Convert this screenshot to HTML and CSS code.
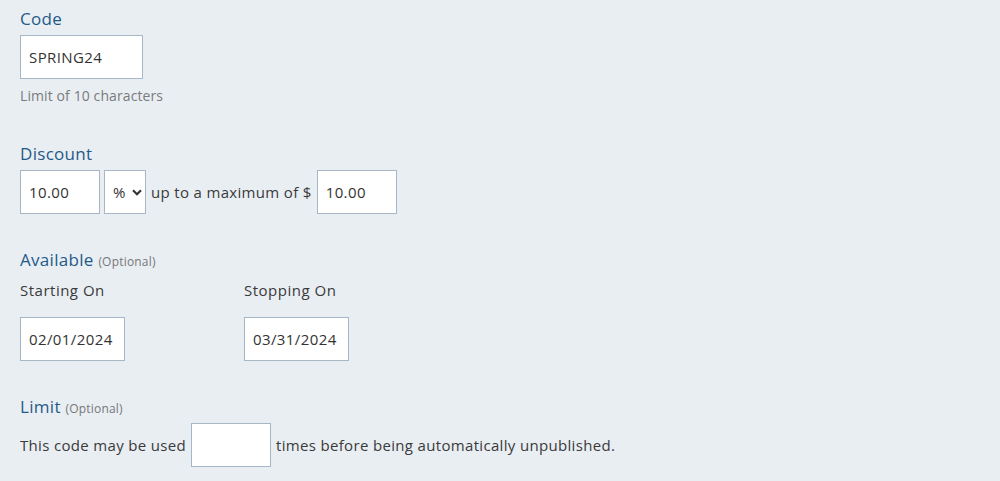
FILE: index.html
```html
<!DOCTYPE html>
<html>
	<head>
		<meta charset="utf-8">
		<title>Coupon</title>
		<link rel="stylesheet" href="styles.css">
	</head>
	<body>
		<form class="coupon-form">
			<div class="field field-code">
				<label class="field-label" for="code">Code</label>
				<input type="text" id="code" class="text-input code-input" value="SPRING24">
				<div class="help-text">Limit of 10 characters</div>
			</div>
			<div class="field">
				<label class="field-label" for="amount">Discount</label>
				<div class="inline-row">
					<input type="text" id="amount" class="text-input amount-input" value="10.00">
					<div class="select-wrap">
						<select class="type-select">
							<option>%</option>
							<option>$</option>
						</select>
						<svg class="select-arrow" width="10" height="7" viewBox="0 0 10 7"><path d="M1 1.2 L5 5.2 L9 1.2" fill="none" stroke="#333" stroke-width="2.2"/></svg>
					</div>
					<span class="row-text">up to a maximum of $</span>
					<input type="text" class="text-input amount-input" value="10.00">
				</div>
			</div>
			<div class="field">
				<div class="field-label">Available <span class="optional">(Optional)</span></div>
				<div class="date-row">
					<div class="date-col">
						<label class="sub-label" for="start">Starting On</label>
						<input type="text" id="start" class="text-input date-input" value="02/01/2024">
					</div>
					<div class="date-col">
						<label class="sub-label" for="stop">Stopping On</label>
						<input type="text" id="stop" class="text-input date-input" value="03/31/2024">
					</div>
				</div>
			</div>
			<div class="field">
				<div class="field-label">Limit <span class="optional">(Optional)</span></div>
				<div class="inline-row">
					<span class="row-text">This code may be used</span>
					<input type="text" class="text-input amount-input" value="">
					<span class="row-text">times before being automatically unpublished.</span>
				</div>
			</div>
		</form>
	</body>
</html>
```

FILE: styles.css
```css
html, body {
	margin: 0;
	padding: 0;
	background-color: #e9eef3;
}
body {
	font-family: "Open Sans", "Noto Sans", sans-serif;
	color: #3a3a3a;
	padding: 8px 20px 0;
}
.field {
	margin-bottom: 35px;
}
.field-code {
	margin-bottom: 37px;
}
.field-label {
	display: block;
	height: 22px;
	line-height: 22px;
	font-size: 17px;
	letter-spacing: 0.3px;
	color: #1f5a89;
	margin-bottom: 5px;
}
.optional {
	font-size: 12px;
	letter-spacing: 0.2px;
	color: #777;
}
.text-input {
	box-sizing: border-box;
	height: 44px;
	border: 1px solid #a8b7c7;
	background-color: #fff;
	padding: 0 8px;
	font-family: inherit;
	font-size: 15px;
	letter-spacing: 0.4px;
	color: #333;
	outline: none;
	margin: 0;
}
.code-input {
	width: 123px;
}
.help-text {
	margin-top: 7px;
	height: 20px;
	line-height: 20px;
	font-size: 14px;
	letter-spacing: 0.1px;
	color: #7b7b7b;
}
.inline-row {
	display: flex;
	align-items: center;
	gap: 5px;
}
.amount-input {
	width: 80px;
}
.select-wrap {
	position: relative;
	margin-left: -1px;
}
.type-select {
	appearance: none;
	-webkit-appearance: none;
	box-sizing: border-box;
	width: 42px;
	height: 44px;
	border: 1px solid #a8b7c7;
	border-radius: 0;
	background-color: #fff;
	padding: 0 0 0 8px;
	font-family: inherit;
	font-size: 15px;
	color: #333;
	outline: none;
	margin: 0;
}
.select-arrow {
	position: absolute;
	right: 4px;
	top: 19px;
	pointer-events: none;
}
.row-text {
	font-size: 15px;
	letter-spacing: 0.33px;
	color: #3a3a3a;
}
.date-row {
	display: flex;
	margin-top: 9px;
}
.date-col {
	width: 224px;
}
.sub-label {
	display: block;
	height: 20px;
	line-height: 20px;
	font-size: 15px;
	letter-spacing: 0.5px;
	color: #3a3a3a;
	margin-bottom: 17px;
}
.date-input {
	width: 105px;
}
```
